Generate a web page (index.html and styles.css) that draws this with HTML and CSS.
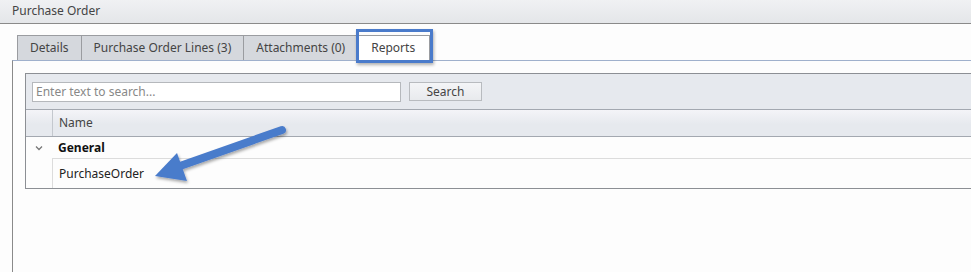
FILE: index.html
```html
<!DOCTYPE html>
<html>

<head>
    <meta charset="UTF-8">
    <meta name="viewport" content="width=device-width, initial-scale=1.0">
    <title>Purchase Order</title>
    <link rel="stylesheet" href="styles.css">
</head>

<body>
    <div class="title-bar">Purchase Order</div>

    <div class="tabs-wrap">
        <div class="tabs">
            <div class="tab">Details</div>
            <div class="tab">Purchase Order Lines (3)</div>
            <div class="tab">Attachments (0)</div>
            <div class="tab active">Reports</div>
            <div class="highlight"></div>
        </div>

        <div class="pane">
            <div class="grid">
                <div class="toolbar">
                    <input type="text" class="search-input" placeholder="Enter text to search...">
                    <button class="search-btn">Search</button>
                </div>
                <div class="row head">
                    <div class="cell-lead"></div>
                    <div class="cell">Name</div>
                </div>
                <div class="row group">
                    <div class="cell-lead">
                        <svg width="8" height="6" viewBox="0 0 8 6"><path d="M1 1.5 L4 4.5 L7 1.5" fill="none" stroke="#777" stroke-width="1.3"/></svg>
                    </div>
                    <div class="cell">General</div>
                </div>
                <div class="row item">
                    <div class="cell-lead"></div>
                    <div class="cell">PurchaseOrder</div>
                </div>
            </div>
        </div>
    </div>

    <svg class="arrow" width="971" height="272" viewBox="0 0 971 272">
        <defs>
            <filter id="shadow" x="-20%" y="-20%" width="140%" height="140%">
                <feDropShadow dx="1" dy="2" stdDeviation="1.5" flood-color="#000" flood-opacity="0.35"/>
            </filter>
        </defs>
        <g filter="url(#shadow)" fill="#4a7bcb">
            <line x1="282" y1="130" x2="180" y2="166" stroke="#4a7bcb" stroke-width="8" stroke-linecap="round"/>
            <polygon points="155,176 177,153 187,181"/>
        </g>
    </svg>
</body>

</html>
```

FILE: styles.css
```css
body {
    margin: 0;
    background: #fdfdfd;
    font-family: "Noto Sans", "Open Sans", sans-serif;
    font-size: 12px;
    color: #333;
    overflow: hidden;
    height: 272px;
    position: relative;
}
.title-bar {
    height: 23px;
    line-height: 22px;
    padding-left: 12px;
    background: linear-gradient(#f0f1f3, #e4e6e9);
    border-bottom: 1px solid #8a8a8a;
    color: #444;
}
.tabs-wrap {
    padding-left: 12px;
    margin-top: 11px;
}
.tabs {
    display: flex;
    padding-left: 5px;
    position: relative;
    height: 25px;
}
.tab {
    height: 24px;
    line-height: 24px;
    padding: 0 12px;
    background: #d5d8dd;
    border: 1px solid #9a9ca0;
    border-bottom: none;
    border-right: none;
    color: #444;
}
.tab.active {
    background: #fff;
    border-right: 1px solid #9a9ca0;
    height: 25px;
    position: relative;
    z-index: 1;
    padding: 0 14px 0 13px;
}
.highlight {
    position: absolute;
    left: 344px;
    top: -6px;
    width: 71px;
    height: 28px;
    border: 3px solid #4a7bcb;
    box-shadow: 1px 2px 3px rgba(0, 0, 0, 0.3);
    z-index: 2;
}
.pane {
    border-top: 1px solid #9fb0cc;
    border-left: 1px solid #8a8a8a;
    margin-right: -20px;
    height: 200px;
    padding: 12px 0 0 12px;
}
.grid {
    border: 1px solid #8c8f94;
    border-right: none;
}
.toolbar {
    display: flex;
    align-items: center;
    gap: 8px;
    height: 35px;
    padding-left: 6px;
    background: #e6e9ee;
    border-bottom: 1px solid #a3a8b0;
}
.search-input {
    width: 369px;
    height: 20px;
    box-sizing: border-box;
    border: 1px solid #b5b8bc;
    padding: 0 3px;
    font-family: inherit;
    font-size: 12px;
    background: #fff;
}
.search-input::placeholder {
    color: #888;
}
.search-btn {
    width: 73px;
    height: 19px;
    padding: 0;
    border: 1px solid #b8bbbf;
    background: linear-gradient(#f4f5f7, #e8eaed);
    font-family: inherit;
    font-size: 12px;
    color: #444;
}
.row {
    display: flex;
}
.cell-lead {
    width: 26px;
    display: flex;
    align-items: center;
    justify-content: center;
}
.cell {
    flex: 1;
    padding-left: 6px;
}
.head {
    height: 26px;
    line-height: 26px;
    background: linear-gradient(#f4f4f8, #e6e9ee 55%);
    border-bottom: 1px solid #a3a8b0;
}
.head .cell {
    border-left: 1px solid #c4c8ce;
    color: #444;
}
.group {
    height: 22px;
    line-height: 22px;
    background: #fdfdfd;
}
.group .cell {
    font-weight: bold;
    color: #111;
    border-bottom: 1px solid #dcdcdc;
}
.item {
    height: 29px;
    line-height: 29px;
    background: #fdfdfd;
}
.item .cell {
    border-left: 1px solid #dcdcdc;
    color: #222;
}
.arrow {
    position: absolute;
    left: 0;
    top: 0;
    pointer-events: none;
}
```
